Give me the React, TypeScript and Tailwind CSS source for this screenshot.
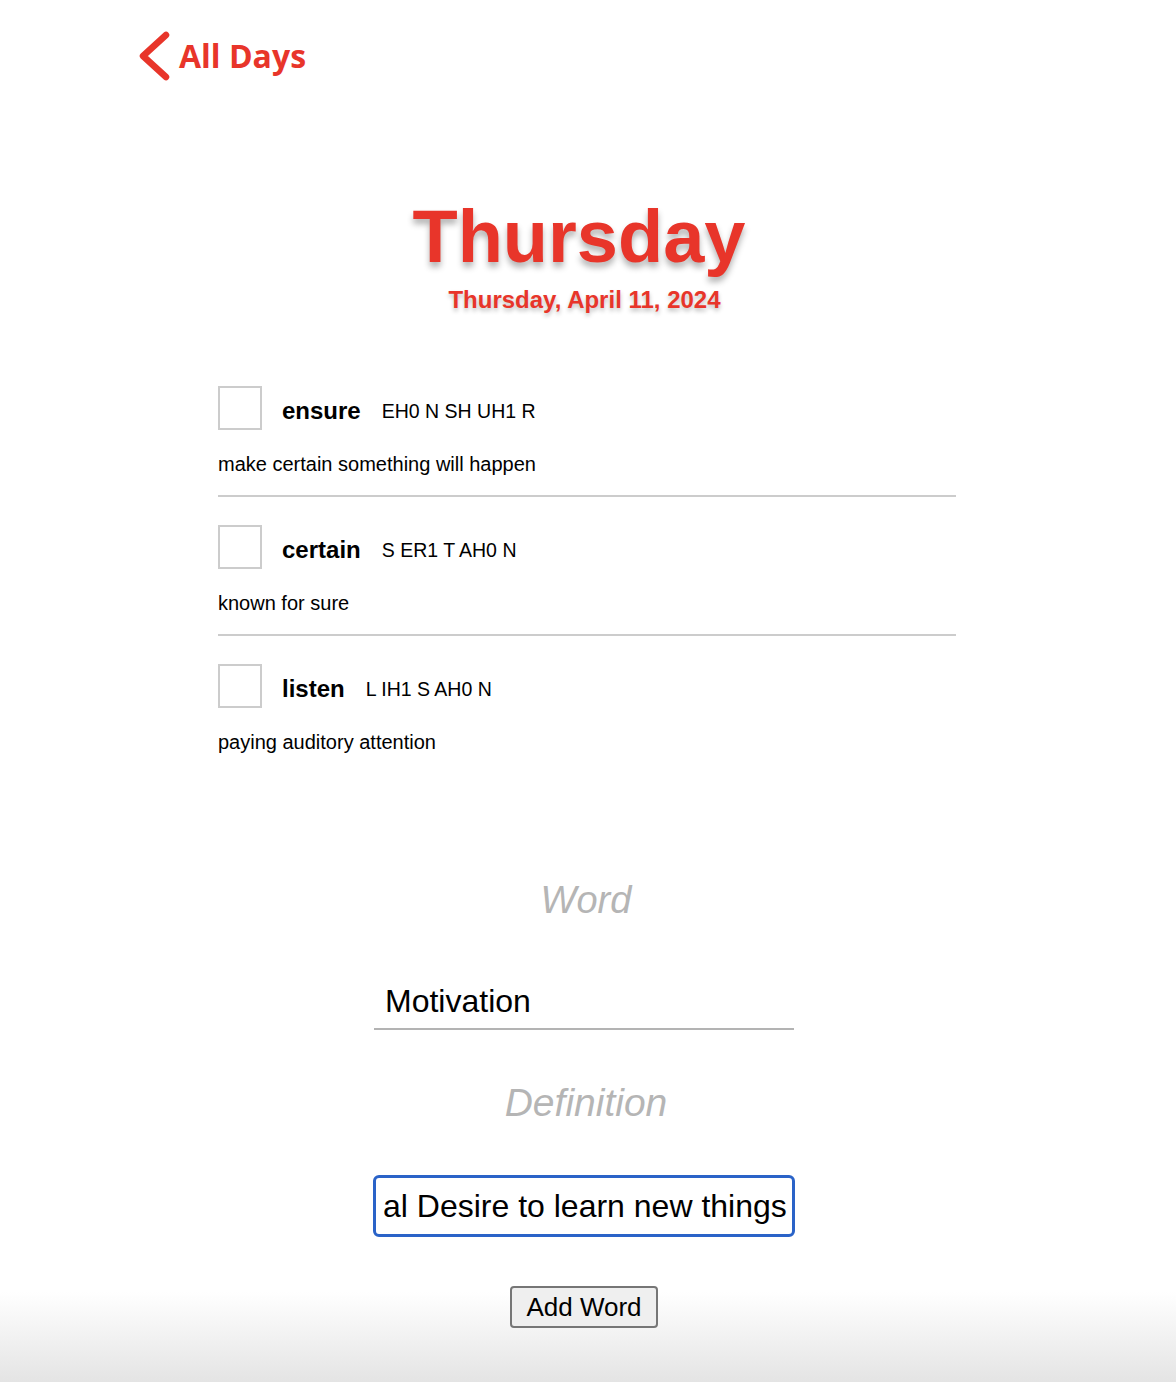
import React, { useState } from 'react';

type Entry = {
  word: string;
  phonetic: string;
  definition: string;
};

const entries: Entry[] = [
  { word: 'ensure', phonetic: 'EH0 N SH UH1 R', definition: 'make certain something will happen' },
  { word: 'certain', phonetic: 'S ER1 T AH0 N', definition: 'known for sure' },
  { word: 'listen', phonetic: 'L IH1 S AH0 N', definition: 'paying auditory attention' },
];

const sans = "font-['Liberation_Sans',Arial,sans-serif]";

const WordRow: React.FC<{ entry: Entry; last: boolean }> = ({ entry, last }) => {
  const [checked, setChecked] = useState(false);
  return (
    <div className={last ? 'pt-[28px]' : 'pt-[28px] pb-[20px] border-b-2 border-[#cccccc]'}>
      <div className="flex items-center h-[44px]">
        <button
          onClick={() => setChecked(c => !c)}
          className={`w-[44px] h-[44px] border-2 border-[#cccccc] ${checked ? 'bg-[#e8352a]' : 'bg-white'}`}
        />
        <span className="ml-[20px] mt-[6px] text-[24px] font-bold text-black">{entry.word}</span>
        <span className="ml-[21px] mt-[8px] text-[19.5px] text-black">{entry.phonetic}</span>
      </div>
      <p className="mt-[23px] text-[20px] leading-[22px] text-black">{entry.definition}</p>
    </div>
  );
};

export default function App() {
  const [word, setWord] = useState('Motivation');

  return (
    <div className={`${sans} min-h-[1382px] bg-[linear-gradient(to_bottom,#ffffff_0px,#ffffff_1292px,#e4e4e4_1382px)]`}>
      <div className="flex items-center pl-[137px] pt-[31px]">
        <svg width="34" height="50" viewBox="0 0 34 50" fill="none">
          <path d="M29 4 L6 25 L29 46" stroke="#e8352a" strokeWidth="6.5" strokeLinecap="round" strokeLinejoin="round" />
        </svg>
        <span className="ml-[8px] text-[32px] font-bold leading-none text-[#e8352a] font-['Open_Sans',sans-serif]">All Days</span>
      </div>

      <div className="flex flex-col items-center mt-[119px] pr-[18px]">
        <h1 className="text-[74px] font-bold leading-none text-[#e8352a] [text-shadow:0_5px_6px_rgba(0,0,0,0.3)]">Thursday</h1>
        <p className="mt-[14px] ml-[11px] text-[24px] font-bold leading-none text-[#e8352a] [text-shadow:0_3px_4px_rgba(0,0,0,0.25)]">
          Thursday, April 11, 2024
        </p>
      </div>

      <div className="w-[738px] ml-[218px] mt-[46px]">
        {entries.map((e, i) => (
          <WordRow key={e.word} entry={e} last={i === entries.length - 1} />
        ))}
      </div>

      <div className="flex flex-col items-center mt-[128px] pr-[4px]">
        <p className="text-[38px] italic leading-none text-[#b5b5b5]">Word</p>
        <input
          value={word}
          onChange={e => setWord(e.target.value)}
          className="mt-[64px] w-[420px] -ml-[4px] border-b-2 border-[#b3b3b3] px-[11px] pb-[9px] text-[32px] leading-[36px] text-black outline-none bg-transparent"
        />
        <p className="mt-[53px] text-[39px] italic leading-none text-[#b5b5b5]">Definition</p>
        <div className="mt-[53px] -ml-[4px] w-[422px] h-[62px] border-[3px] border-[#2a63c8] rounded-[6px] px-[7px] flex items-center overflow-hidden whitespace-nowrap bg-white">
          <span className="text-[32px] leading-none text-black">al Desire to learn new things</span>
        </div>
        <button className="mt-[49px] -ml-[4px] w-[148px] h-[42px] bg-[#efefef] border-2 border-[#767676] rounded-[4px] text-[26px] leading-none text-black">
          Add Word
        </button>
      </div>
    </div>
  );
}
